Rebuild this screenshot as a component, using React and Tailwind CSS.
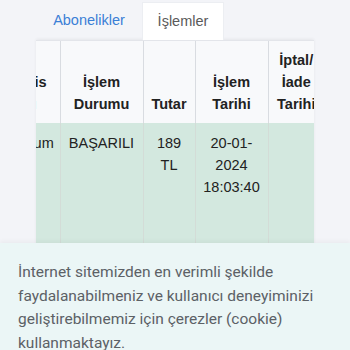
export default function App() {
  const th = "border-r border-[#d9dce1] px-1 pt-2 pb-2 text-center align-bottom font-bold overflow-visible whitespace-nowrap";
  const td = "border-r border-[#d3dcd7] px-1 pt-[9px] text-center align-top whitespace-nowrap";
  return (
    <div className="relative w-[350px] h-[350px] overflow-hidden bg-[#f3f4f8]" style={{ fontFamily: '"Liberation Sans", Arial, sans-serif' }}>
      <div className="flex h-[40px] items-end pl-[36px]">
        <div className="flex h-[38px] w-[106px] items-center justify-center text-[14.5px] text-[#3b7fd6]">Abonelikler</div>
        <div className="flex h-[38px] w-[82px] items-center justify-center border-x border-t border-[#eceef2] bg-white text-[14.5px] text-[#5a5a5a]">İşlemler</div>
      </div>
      <div className="ml-[36px] w-[278px] overflow-hidden border-t border-[#e3e5ea] shadow-[0_-1px_3px_rgba(0,0,0,0.06)]">
        <table className="ml-[-46px] w-[334px] table-fixed border-collapse text-[14.5px] leading-[22px] text-[#222]">
          <colgroup>
            <col className="w-[70px]" />
            <col className="w-[83px]" />
            <col className="w-[52px]" />
            <col className="w-[73px]" />
            <col className="w-[56px]" />
          </colgroup>
          <thead>
            <tr className="h-[82px] bg-[#f8f9fb]">
              <th className={th}>Servis<br />Adı</th>
              <th className={th}>İşlem<br />Durumu</th>
              <th className={th}>Tutar</th>
              <th className={th}>İşlem<br />Tarihi</th>
              <th className={th + " border-r-0"}>İptal/<br />İade<br />Tarihi</th>
            </tr>
          </thead>
          <tbody>
            <tr className="h-[120px] bg-[#d3e8df]">
              <td className={td}>Premium</td>
              <td className={td}>BAŞARILI</td>
              <td className={td}>189<br />TL</td>
              <td className={td}>20-01-<br />2024<br />18:03:40</td>
              <td className={td + " border-r-0"}></td>
            </tr>
            <tr className="h-[40px] bg-[#d3e8df]">
              <td className={td}></td>
              <td className={td}></td>
              <td className={td}></td>
              <td className={td}></td>
              <td className={td + " border-r-0"}></td>
            </tr>
          </tbody>
        </table>
      </div>
      <div className="absolute left-0 right-0 top-[243px] bottom-0 bg-[#ebf6f6] px-[18px] pt-[18px] text-[15.5px] leading-[23.5px] text-[#5c6166] shadow-[0_-2px_4px_rgba(0,0,0,0.04)]" style={{ fontFamily: 'Roboto, sans-serif' }}>
        İnternet sitemizden en verimli şekilde faydalanabilmeniz ve kullanıcı deneyiminizi geliştirebilmemiz için çerezler (cookie) kullanmaktayız.
      </div>
    </div>
  );
}
